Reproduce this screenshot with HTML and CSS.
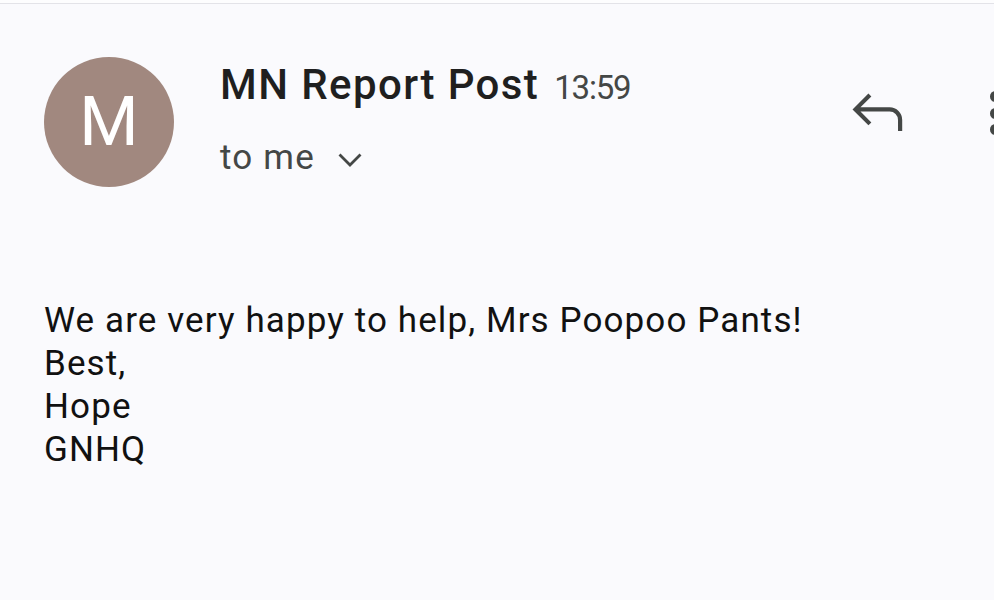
FILE: index.html
```html
<!DOCTYPE html>
<html lang="en">
<head>
<meta charset="utf-8">
<link rel="stylesheet" href="styles.css">
</head>
<body>
<div class="topbar"></div>
<main class="mail">
  <header class="head">
    <div class="avatar">M</div>
    <div class="meta">
      <div class="from"><span class="name">MN Report Post</span><span class="time">13:59</span></div>
      <div class="to">to me
        <svg class="chev" viewBox="0 0 24 14" width="24" height="14"><path d="M2.5 2.5l9.5 9.5 9.5-9.5" fill="none" stroke="#444746" stroke-width="2.8" stroke-linecap="square"/></svg>
      </div>
    </div>
    <div class="actions">
      <svg class="reply" viewBox="0 -960 960 960" width="67" height="67"><path fill="#444746" d="M774-200v-160q0-50-35-85t-85-35H236l156 156-42 42-228-228 228-228 42 42-156 156h418q75 0 127.5 52.5T834-360v160h-60Z"/></svg>
      <div class="more"><span></span><span></span><span></span></div>
    </div>
  </header>
  <div class="body">
    <p>We are very happy to help, Mrs Poopoo Pants!<br>Best,<br>Hope<br>GNHQ</p>
  </div>
</main>
</body>
</html>
```

FILE: styles.css
```css
html, body {
  margin: 0;
  padding: 0;
  background: #fafafd;
  font-family: Roboto, "Noto Sans", sans-serif;
  overflow: hidden;
}
.topbar {
  height: 3px;
  background: #fdfdfe;
  border-bottom: 1px solid #e3e3e8;
}
.mail {
  padding: 53px 0 0 44px;
}
.head {
  display: flex;
  align-items: flex-start;
}
.avatar {
  width: 130px;
  height: 130px;
  border-radius: 50%;
  background: #a1887f;
  color: #fff;
  font-size: 68px;
  font-weight: 400;
  display: flex;
  align-items: center;
  justify-content: center;
  flex: none;
}
.meta {
  margin-left: 46px;
  padding-top: 3px;
}
.from {
  display: flex;
  align-items: baseline;
  white-space: nowrap;
}
.name {
  font-size: 42px;
  color: #1f1f1f;
  font-weight: 500;
  letter-spacing: 1.4px;
}
.time {
  font-size: 33px;
  color: #444746;
  margin-left: 15px;
  letter-spacing: -1.2px;
}
.to {
  display: flex;
  align-items: center;
  margin-top: 28px;
  font-size: 35px;
  letter-spacing: 1.2px;
  color: #444746;
}
.chev {
  margin-left: 23px;
  margin-top: 4px;
}
.actions {
  margin-left: auto;
  display: flex;
  align-items: flex-start;
  padding-top: 21px;
}
.reply {
  display: block;
  margin-right: 79px;
}
.more {
  display: flex;
  flex-direction: column;
  gap: 5.5px;
  padding-top: 13px;
  margin-right: -7px;
}
.more span {
  display: block;
  width: 11px;
  height: 11px;
  border-radius: 50%;
  background: #444746;
}
.body {
  margin-top: 112px;
}
.body p {
  margin: 0;
  font-size: 35px;
  line-height: 43px;
  letter-spacing: 1.1px;
  color: #111;
}
```
